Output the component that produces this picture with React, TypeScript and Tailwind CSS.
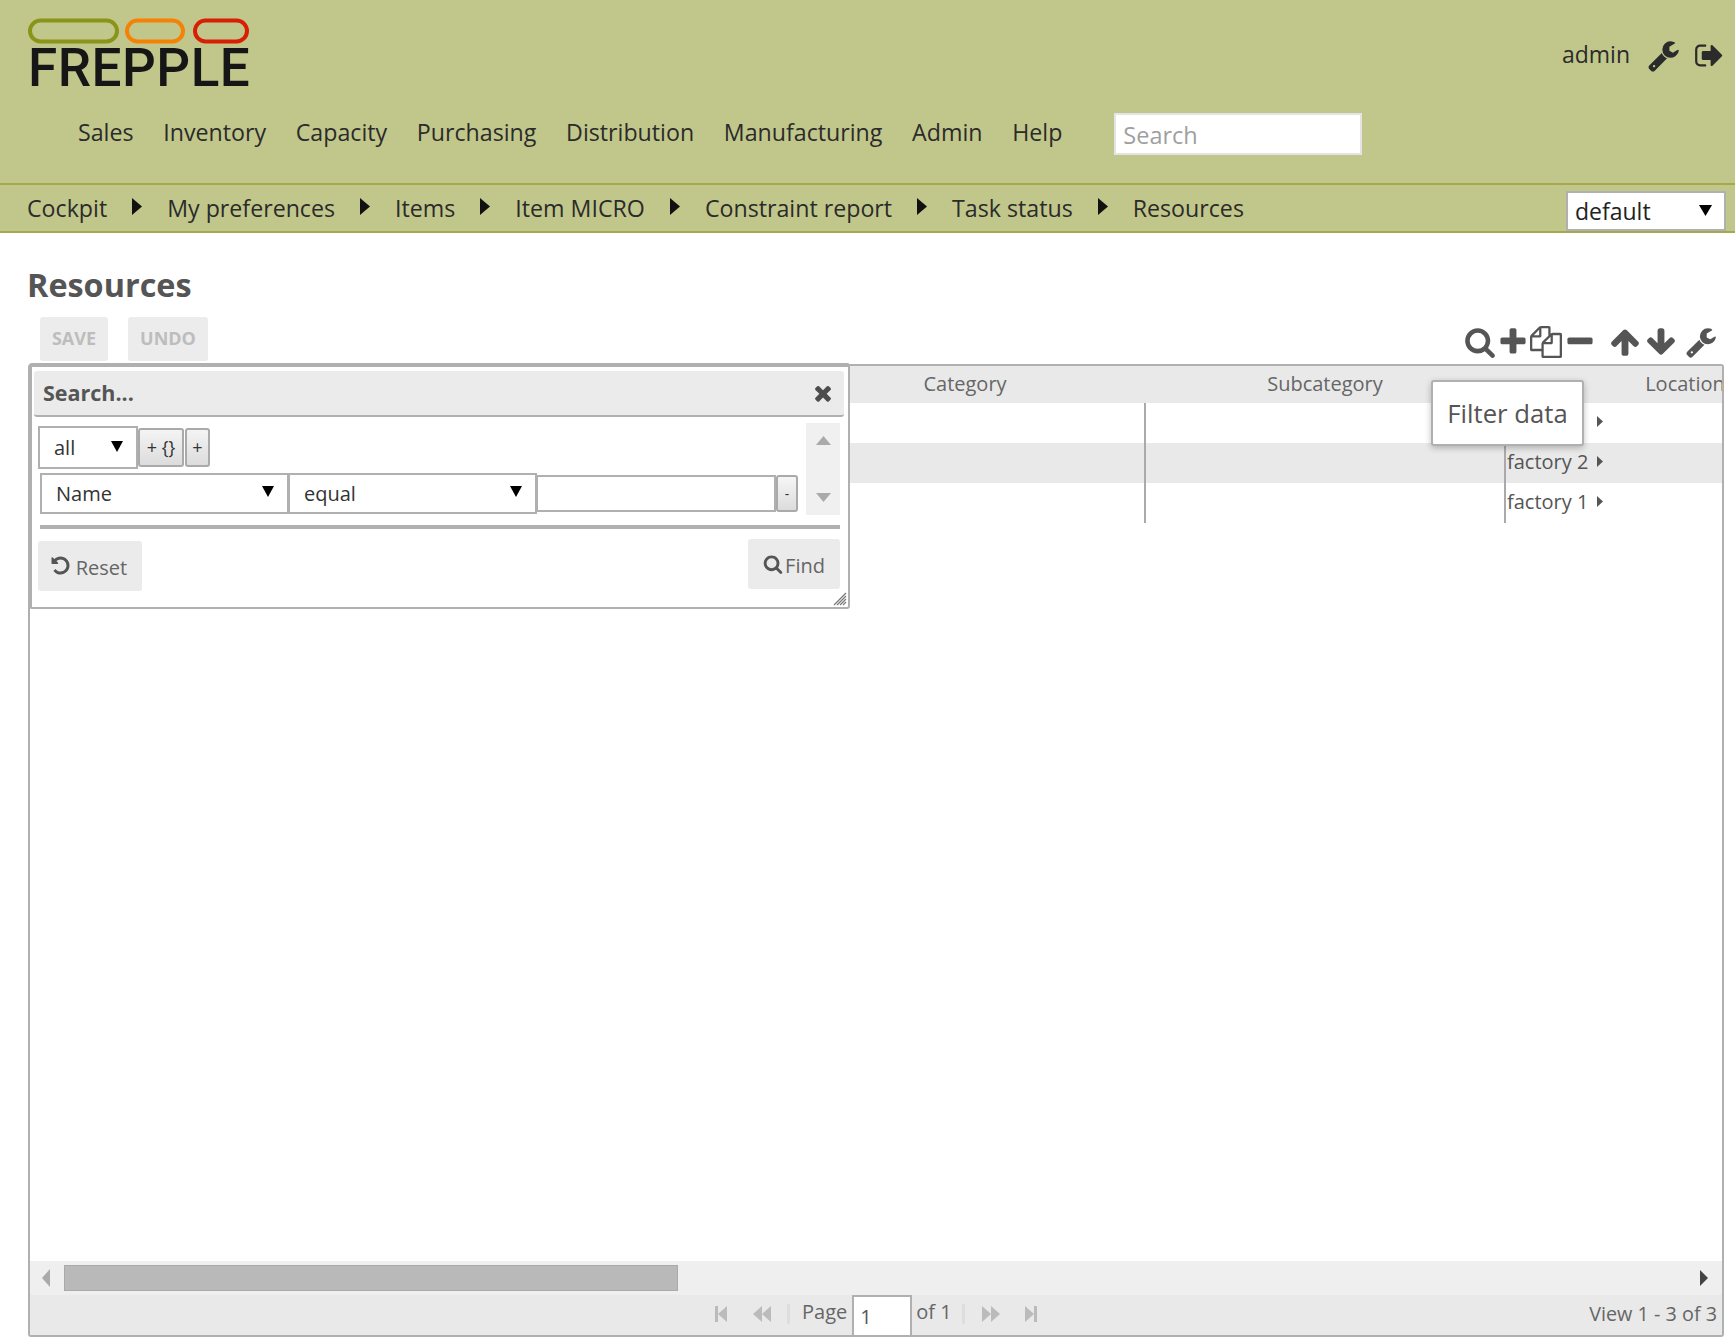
import React from "react";

const P: Record<string, string> = {
  wrench: "M448 1472q0-26-19-45t-45-19-45 19-19 45 19 45 45 19 45-19 19-45zm644-420l-682 682q-37 37-90 37-52 0-91-37l-106-108q-38-36-38-90 0-53 38-91l681-681q39 98 114.5 173.5t173.5 114.5zm634-435q0 39-23 106-47 134-164.5 217.5t-258.5 83.5q-185 0-316.5-131.5t-131.5-316.5 131.5-316.5 316.5-131.5q58 0 121.5 16.5t107.5 46.5q16 11 16 28t-16 28l-293 169v224l193 107q5-3 79-48.5t135.5-81 70.5-35.5q15 0 23.5 10t8.5 25z",
  signout: "M704 1440q0 4 1 20t.5 26.5-3 23.5-10 19.5-20.5 6.5h-320q-119 0-203.5-84.5t-84.5-203.5v-704q0-119 84.5-203.5t203.5-84.5h320q13 0 22.5 9.5t9.5 22.5q0 4 1 20t.5 26.5-3 23.5-10 19.5-20.5 6.5h-320q-66 0-113 47t-47 113v704q0 66 47 113t113 47h312l11.5 1 11.5 3 8 5.5 7 9 2 13.5zm928-544q0 26-19 45l-544 544q-19 19-45 19t-45-19-19-45v-288h-448q-26 0-45-19t-19-45v-384q0-26 19-45t45-19h448v-288q0-26 19-45t45-19 45 19l544 544q19 19 19 45z",
  search: "M1216 832q0-185-131.5-316.5t-316.5-131.5-316.5 131.5-131.5 316.5 131.5 316.5 316.5 131.5 316.5-131.5 131.5-316.5zm512 832q0 52-38 90t-90 38q-54 0-90-38l-343-342q-179 124-399 124-143 0-273.5-55.5t-225-150-150-225-55.5-273.5 55.5-273.5 150-225 225-150 273.5-55.5 273.5 55.5 225 150 150 225 55.5 273.5q0 220-124 399l343 343q37 37 37 90z",
  plus: "M1600 736v192q0 40-28 68t-68 28h-416v416q0 40-28 68t-68 28h-192q-40 0-68-28t-28-68v-416h-416q-40 0-68-28t-28-68v-192q0-40 28-68t68-28h416v-416q0-40 28-68t68-28h192q40 0 68 28t28 68v416h416q40 0 68 28t28 68z",
  minus: "M1600 736v192q0 40-28 68t-68 28h-1216q-40 0-68-28t-28-68v-192q0-40 28-68t68-28h1216q40 0 68 28t28 68z",
  up: "M1675 971q0 51-37 90l-75 75q-38 38-91 38-54 0-90-38l-294-293v704q0 52-37.5 84.5t-90.5 32.5h-128q-53 0-90.5-32.5t-37.5-84.5v-704l-294 293q-36 38-90 38t-90-38l-75-75q-38-38-38-90 0-53 38-91l651-651q35-37 90-37 54 0 91 37l651 651q37 39 37 91z",
  down: "M1675 832q0 53-37 90l-651 652q-39 37-91 37-53 0-90-37l-651-652q-38-36-38-90 0-53 38-91l74-75q39-37 91-37 53 0 90 37l294 294v-704q0-52 38-90t90-38h128q52 0 90 38t38 90v704l294-294q37-37 90-37 52 0 91 37l75 75q37 39 37 91z",
  files: "M1696 384q40 0 68 28t28 68v1216q0 40-28 68t-68 28h-960q-40 0-68-28t-28-68v-288h-544q-40 0-68-28t-28-68v-672q0-40 20-88t48-76l408-408q28-28 76-48t88-20h416q40 0 68 28t28 68v328q68-40 128-40h416zm-544 213l-299 299h299v-299zm-640-384l-299 299h299v-299zm196 647l316-316v-416h-384v416q0 40-28 68t-68 28h-416v640h512v-256q0-40 20-88t48-76zm956 804v-1152h-384v416q0 40-28 68t-68 28h-416v640h896z",
  times: "M1490 1322q0 40-28 68l-136 136q-28 28-68 28t-68-28l-294-294-294 294q-28 28-68 28t-68-28l-136-136q-28-28-28-68t28-68l294-294-294-294q-28-28-28-68t28-68l136-136q28-28 68-28t68 28l294 294 294-294q28-28 68-28t68 28l136 136q28 28 28 68t-28 68l-294 294 294 294q28 28 28 68z",
  undo: "M1664 896q0 156-61 298t-164 245-245 164-298 61q-172 0-327-72.5t-264-204.5q-7-10-6.5-22.5t8.5-20.5l137-138q10-9 25-9 16 2 23 12 73 95 179 147t225 52q104 0 198.5-40.5t163.5-109.5 109.5-163.5 40.5-198.5-40.5-198.5-109.5-163.5-163.5-109.5-198.5-40.5q-98 0-188 35.5t-160 101.5l137 138q31 30 14 69-17 40-59 40h-448q-26 0-45-19t-19-45v-448q0-42 40-59 39-17 69 14l130 129q107-101 244.5-156.5t284.5-55.5q156 0 298 61t245 164 164 245 61 298z",
};

function Icon({ name, className }: { name: string; className: string }) {
  return (
    <svg viewBox="0 0 1792 1792" className={className} fill="currentColor">
      <path d={P[name]} />
    </svg>
  );
}

function Tri({ dir, className }: { dir: "r" | "l" | "u" | "d"; className: string }) {
  const pts = { r: "0,0 10,6 0,12", l: "10,0 0,6 10,12", u: "0,10 6,0 12,10", d: "0,0 12,0 6,10" }[dir];
  const vb = dir === "r" || dir === "l" ? "0 0 10 12" : "0 0 12 10";
  return (
    <svg viewBox={vb} className={className} preserveAspectRatio="none" fill="currentColor">
      <polygon points={pts} />
    </svg>
  );
}

function Crumb({ label, last }: { label: string; last?: boolean }) {
  return (
    <>
      <span>{label}</span>
      {!last && <Tri dir="r" className="w-[10px] h-[17px] text-[#111] mx-[25px] -mt-[4px]" />}
    </>
  );
}

function Select({ label, className, arrow }: { label: string; className: string; arrow: string }) {
  return (
    <div className={`relative flex items-center bg-white border-2 border-[#b0b0b0] text-[20px] text-[#333] ${className}`}>
      <span>{label}</span>
      <Tri dir="d" className={`absolute w-[12px] h-[11px] text-black ${arrow}`} />
    </div>
  );
}

const navItems = ["Sales", "Inventory", "Capacity", "Purchasing", "Distribution", "Manufacturing", "Admin", "Help"];
const crumbs = ["Cockpit", "My preferences", "Items", "Item MICRO", "Constraint report", "Task status"];

export default function App() {
  return (
    <div className="relative w-[1735px] h-[1338px] overflow-hidden bg-white font-['Open_Sans',sans-serif]">
      {/* Header */}
      <header className="h-[185px] bg-[#c1c78a] border-b-2 border-[#a3a94c] flex justify-between text-[#2b2b2b]">
        <div>
          <div className="pl-[28px] pt-[18px]">
            <svg width="226" height="27" viewBox="0 0 226 27" className="block">
              <rect x="2" y="2.5" width="87" height="21" rx="10.5" fill="none" stroke="#8a9418" strokeWidth="4" />
              <rect x="99" y="2.5" width="56" height="21" rx="10.5" fill="none" stroke="#f58205" strokeWidth="4" />
              <rect x="167" y="2.5" width="52" height="21" rx="10.5" fill="none" stroke="#d81e05" strokeWidth="4" />
            </svg>
            <div className="font-['Roboto',sans-serif] font-medium text-[53px] leading-[44px] tracking-[0.5px] text-[#161616] mt-[1px]">
              FREPPLE
            </div>
          </div>
          <div className="flex items-start pl-[78px] mt-[24px]">
            <nav className="flex gap-[29.7px] text-[23.2px] leading-[32px] mt-[2px]">
              {navItems.map((n) => (
                <span key={n}>{n}</span>
              ))}
            </nav>
            <div className="ml-[52px] -mt-[1px] w-[248px] h-[42px] bg-white border-2 border-[#e4e4e4] flex items-center pl-[7px] pt-[4px] text-[23.5px] text-[#9f9f9f]">
              Search
            </div>
          </div>
        </div>
        <div className="flex items-start pt-[38px] pr-[10px]">
          <span className="text-[23px] leading-[32px]">admin</span>
          <Icon name="wrench" className="w-[33px] h-[33px] ml-[17px] mt-[1px]" />
          <Icon name="signout" className="w-[31px] h-[31px] ml-[14px] mt-[2px]" />
        </div>
      </header>

      {/* Breadcrumbs */}
      <div className="h-[48px] bg-[#c1c78a] border-b-2 border-[#a3a94c] flex items-center justify-between pl-[27px] pr-[9px] text-[#2b2b2b]">
        <div className="flex items-center text-[23.2px] pt-[1px]">
          {crumbs.map((c) => (
            <Crumb key={c} label={c} />
          ))}
          <Crumb label="Resources" last />
        </div>
        <div className="relative w-[160px] h-[40px] mt-[5px] bg-white border-2 border-[#b0b0b0] flex items-center pl-[7px] pt-[2px] text-[23px] text-[#222]">
          default
          <Tri dir="d" className="absolute right-[12px] top-[12px] w-[13px] h-[11px] text-black" />
        </div>
      </div>

      {/* Main */}
      <main className="pl-[28px] pr-[11px]">
        <h1 className="text-[32.4px] leading-[40px] font-bold text-[#555] mt-[31px] -ml-[1px]">Resources</h1>
        <div className="flex justify-between items-end h-[46px] mt-[13px]">
          <div className="flex gap-[20px] pl-[12px] self-start">
            <div className="w-[68px] h-[44px] bg-[#ececec] rounded-[3px] flex items-center justify-center pb-[2px] text-[18px] font-bold text-[#bdbdbd]">SAVE</div>
            <div className="w-[80px] h-[44px] bg-[#ececec] rounded-[3px] flex items-center justify-center pb-[2px] text-[18px] font-bold text-[#bdbdbd]">UNDO</div>
          </div>
          <div className="flex items-center text-[#555] mb-[5px] pr-[7px]">
            <Icon name="search" className="w-[32px] h-[32px]" />
            <Icon name="plus" className="w-[32px] h-[32px] ml-[1px]" />
            <Icon name="files" className="w-[32px] h-[32px] ml-[1px]" />
            <Icon name="minus" className="w-[32px] h-[32px] ml-[2px]" />
            <Icon name="up" className="w-[32px] h-[32px] ml-[13px]" />
            <Icon name="down" className="w-[32px] h-[32px] ml-[4px]" />
            <Icon name="wrench" className="w-[32px] h-[32px] ml-[8px]" />
          </div>
        </div>

        {/* Grid */}
        <section className="mt-[1px] w-[1696px] h-[973px] border-2 border-[#b0b0b0] rounded-[3px] flex flex-col overflow-hidden text-[#666]">
          <div className="flex h-[37px] bg-[#e9e9e9] items-center text-[20px] shrink-0">
            <div className="w-[755px] shrink-0" />
            <div className="w-[360px] shrink-0 text-center -mt-[2px]">Category</div>
            <div className="w-[360px] shrink-0 text-center -mt-[2px]">Subcategory</div>
            <div className="w-[360px] shrink-0 text-center -mt-[2px] whitespace-nowrap">Location</div>
          </div>
          {["", "factory 2", "factory 1"].map((loc, i) => (
            <div key={i} className={`flex h-[40px] items-center shrink-0 text-[20px] ${i === 1 ? "bg-[#e9e9e9]" : "bg-white"}`}>
              <div className="w-[756px] shrink-0" />
              <div className="w-[360px] h-full shrink-0 border-r-2 border-[#aaa]" />
              <div className="w-[360px] h-full shrink-0 border-r-2 border-[#aaa]" />
              <div className="flex items-center text-[#555] w-[100px] h-full relative">
                <span className="-mt-[2px] ml-[1px]">{loc}</span>
                <Tri dir="r" className="absolute left-[91px] top-[13px] w-[6px] h-[11px] text-[#555]" />
              </div>
            </div>
          ))}
          <div className="flex-1" />
          {/* Scrollbar */}
          <div className="h-[34px] bg-[#efefef] flex items-center shrink-0 relative">
            <Tri dir="l" className="ml-[12px] w-[8px] h-[18px] text-[#aaa]" />
            <div className="ml-[14px] w-[614px] h-[26px] bg-[#b9b9b9] border border-[#aaa]" />
            <Tri dir="r" className="ml-auto mr-[14px] w-[8px] h-[16px] text-[#444]" />
          </div>
          {/* Pager */}
          <div className="h-[40px] bg-[#e9e9e9] flex items-center shrink-0 relative text-[20px] text-[#666]">
            <div className="flex items-center ml-[685px] h-full">
              <div className="flex items-center text-[#bbb] -mt-[3px]">
                <div className="w-[3px] h-[16px] bg-[#bbb]" />
                <Tri dir="l" className="w-[9px] h-[16px]" />
              </div>
              <div className="flex items-center ml-[26px] text-[#bbb] -mt-[3px]">
                <Tri dir="l" className="w-[9px] h-[16px]" />
                <Tri dir="l" className="w-[9px] h-[16px]" />
              </div>
              <div className="w-[3px] h-[20px] bg-[#dedede] ml-[16px] -mt-[3px]" />
              <span className="ml-[12px] -mt-[6px]">Page</span>
              <div className="ml-[5px] w-[60px] h-full bg-white border-2 border-b-0 border-[#b0b0b0] flex items-center pl-[6px] pt-[1px] text-[#555]">1</div>
              <span className="ml-[4px] -mt-[6px]">of 1</span>
              <div className="w-[3px] h-[20px] bg-[#dedede] ml-[10px] -mt-[3px]" />
              <div className="flex items-center ml-[17px] text-[#bbb] -mt-[3px]">
                <Tri dir="r" className="w-[9px] h-[16px]" />
                <Tri dir="r" className="w-[9px] h-[16px]" />
              </div>
              <div className="flex items-center ml-[25px] text-[#bbb] -mt-[3px]">
                <Tri dir="r" className="w-[9px] h-[16px]" />
                <div className="w-[3px] h-[16px] bg-[#bbb]" />
              </div>
            </div>
            <span className="ml-auto pr-[5px] -mt-[3px] text-[19.8px] text-[#666]">View 1 - 3 of 3</span>
          </div>
        </section>
      </main>

      {/* Search dialog */}
      <div className="absolute left-[29px] top-[363px] w-[821px] h-[246px] bg-white border-2 border-t-[4px] border-l-[3px] border-[#b0b0b0] rounded-[3px] px-[2px] pt-[4px]">
        <div className="h-[46px] mr-[2px] bg-[#ebebeb] border-b-2 border-[#b0b0b0] rounded-[3px] flex items-center justify-between pl-[9px] pr-[9px]">
          <span className="text-[21.5px] font-bold text-[#555]">Search...</span>
          <Icon name="times" className="w-[24px] h-[24px] text-[#4d4d4d]" />
        </div>
        <div className="relative h-[92px] mt-[6px]">
          <div className="flex items-center ml-[4px] pt-[3px]">
            <Select label="all" className="w-[100px] h-[43px] pl-[14px]" arrow="right-[13px] top-[13px]" />
            <div className="w-[46px] h-[39px] rounded-[3px] border-2 border-[#aaa] bg-gradient-to-b from-[#f4f4f4] to-[#dcdcdc] flex items-center justify-center text-[18px] text-[#333]">+ {"{}"}</div>
            <div className="w-[25px] h-[39px] ml-[1px] rounded-[3px] border-2 border-[#aaa] bg-gradient-to-b from-[#f4f4f4] to-[#dcdcdc] flex items-center justify-center text-[18px] text-[#333]">+</div>
          </div>
          <div className="flex items-center ml-[6px] mt-[4px]">
            <Select label="Name" className="w-[249px] h-[41px] pl-[14px]" arrow="right-[13px] top-[11px]" />
            <Select label="equal" className="w-[249px] h-[41px] -ml-[1px] pl-[14px]" arrow="right-[13px] top-[11px]" />
            <div className="w-[240px] h-[37px] -ml-[1px] bg-white border-2 border-[#b0b0b0]" />
            <div className="w-[22px] h-[37px] rounded-[3px] border-2 border-[#aaa] bg-gradient-to-b from-[#f6f6f6] to-[#dcdcdc] flex items-center justify-center text-[14px] text-[#333]">-</div>
          </div>
          <div className="absolute right-[6px] top-0 w-[34px] h-[92px] bg-[#f0f0f0] flex flex-col items-center justify-between py-[13px]">
            <Tri dir="u" className="w-[15px] h-[9px] text-[#aaa]" />
            <Tri dir="d" className="w-[15px] h-[9px] text-[#aaa]" />
          </div>
        </div>
        <div className="h-[4px] bg-[#b0b0b0] ml-[6px] mr-[6px] mt-[10px]" />
        <div className="flex justify-between items-start mt-[10px] ml-[4px] mr-[6px]">
          <div className="mt-[2px] w-[104px] h-[50px] bg-[#ebebeb] rounded-[3px] flex items-center justify-center text-[20px] text-[#666] pt-[3px]">
            <Icon name="undo" className="w-[21px] h-[21px] text-[#555] mr-[5px] -mt-[5px] -ml-[3px]" />
            Reset
          </div>
          <div className="w-[92px] h-[50px] bg-[#ebebeb] rounded-[3px] flex items-center justify-center text-[20px] text-[#666] pt-[4px]">
            <Icon name="search" className="w-[20px] h-[20px] text-[#555] mr-[2px] -mt-[5px]" />
            Find
          </div>
        </div>
        <svg viewBox="0 0 14 14" className="absolute right-[1px] bottom-[1px] w-[14px] h-[14px]">
          <path d="M13 1L1 13M13 4L4 13M13 7L7 13M13 10L10 13" stroke="#777" strokeWidth="1.2" fill="none" />
        </svg>
      </div>

      {/* Tooltip */}
      <div className="absolute left-[1431px] top-[380px] w-[153px] h-[66px] bg-white border-2 border-[#b0b0b0] rounded-[3px] shadow-[0_2px_6px_rgba(0,0,0,0.25)] flex items-center justify-center pt-[2px] text-[25.7px] text-[#555]">
        Filter data
      </div>
    </div>
  );
}
